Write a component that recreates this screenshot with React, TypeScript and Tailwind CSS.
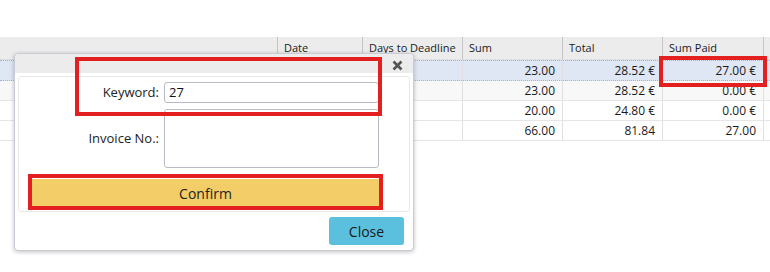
import React from "react";

const cols = [
  { w: "w-[278px]", label: "" },
  { w: "w-[85px]", label: "Date" },
  { w: "w-[100px]", label: "Days to Deadline" },
  { w: "w-[100px]", label: "Sum" },
  { w: "w-[100px]", label: "Total" },
  { w: "w-[101px]", label: "Sum Paid" },
];

const rows = [
  ["23.00", "28.52 €", "27.00 €"],
  ["23.00", "28.52 €", "0.00 €"],
  ["20.00", "24.80 €", "0.00 €"],
  ["66.00", "81.84", "27.00"],
];

function Row({ vals, idx }: { vals: string[]; idx: number }) {
  const selected = idx === 0;
  const bg = selected ? "bg-[#dfe6f4]" : idx === 1 ? "bg-[#f8f8f8]" : "bg-white";
  const border = selected
    ? "border-y border-dotted border-[#9fb1dd]"
    : "border-b border-[#e6e6e6]";
  return (
    <div className={`flex h-[20px] ${bg} ${border} ${selected ? "h-[21px]" : ""}`}>
      <div className="w-[278px] border-r border-[#ececec]" />
      <div className="w-[85px] border-r border-[#ececec]" />
      <div className="w-[100px] border-r border-[#e0e0e0]" />
      {vals.map((v, i) => (
        <div
          key={i}
          className={`${i === 2 ? "w-[101px]" : "w-[100px]"} border-r border-[#e0e0e0] flex items-center justify-end pr-[7px] text-[12px] text-[#1a1a1a]`}
        >
          {v}
        </div>
      ))}
    </div>
  );
}

export default function App() {
  return (
    <div
      className="relative w-[770px] h-[272px] bg-white overflow-hidden"
      style={{ fontFamily: '"Open Sans", "Noto Sans", sans-serif' }}
    >
      <div className="pt-[37px]">
        <div className="flex h-[23px] bg-[#ececec] border-b border-[#dedede]">
          {cols.map((c, i) => (
            <div
              key={i}
              className={`${c.w} border-r border-[#c4c4c4] flex items-center pl-[6px] text-[11px] text-[#1a1a1a]`}
            >
              {c.label}
            </div>
          ))}
        </div>
        {rows.map((r, i) => (
          <Row key={i} vals={r} idx={i} />
        ))}
      </div>

      {/* Dialog */}
      <div className="absolute left-[14px] top-[53px] w-[400px] h-[198px] bg-white border border-[#c9ccd4] rounded-[4px] shadow-[0_1px_4px_rgba(0,0,0,0.25)] flex flex-col">
        <div className="h-[19px] bg-[#ececec] rounded-t-[4px] relative">
          <svg
            className="absolute right-[10px] top-[6px]"
            width="11"
            height="11"
            viewBox="0 0 11 11"
          >
            <path d="M1.5 1.5 L9.5 9.5 M9.5 1.5 L1.5 9.5" stroke="#555" strokeWidth="2.6" strokeLinecap="butt" />
          </svg>
        </div>
        <div className="mx-[3px] mt-[3px] h-[136px] border border-[#e8e8e8] rounded-[3px] flex flex-col">
          <div className="flex items-center mt-[5px]">
            <div className="w-[140px] text-right text-[13px] text-[#222]">Keyword:</div>
            <div className="ml-[5px] w-[215px] h-[21px] border border-[#b9b9c9] rounded-[3px] flex items-center pl-[4px] text-[13px] text-[#111]">
              27
            </div>
          </div>
          <div className="flex items-center mt-[6px]">
            <div className="w-[140px] text-right text-[13px] text-[#222]">Invoice No.:</div>
            <div className="ml-[5px] w-[215px] h-[59px] border border-[#b9b9c9] rounded-[3px]" />
          </div>
          <div className="mt-[11px] ml-[13px] w-[347px] h-[28px] bg-[#f3cd68] flex items-center justify-center text-[14px] text-[#222]">
            Confirm
          </div>
        </div>
        <div className="flex justify-end pr-[9px] mt-[5px]">
          <div className="w-[75px] h-[28px] bg-[#5bc0de] rounded-[3px] flex items-center justify-center text-[14px] text-[#1a1a1a]">
            Close
          </div>
        </div>
      </div>

      {/* Red annotation boxes */}
      <div className="absolute left-[75px] top-[57px] w-[307px] h-[59px] border-[4px] border-[#e3201f]" />
      <div className="absolute left-[28px] top-[174px] w-[355px] h-[36px] border-[4px] border-[#e3201f]" />
      <div className="absolute left-[659px] top-[56px] w-[108px] h-[31px] border-[4px] border-[#e3201f]" />
    </div>
  );
}
